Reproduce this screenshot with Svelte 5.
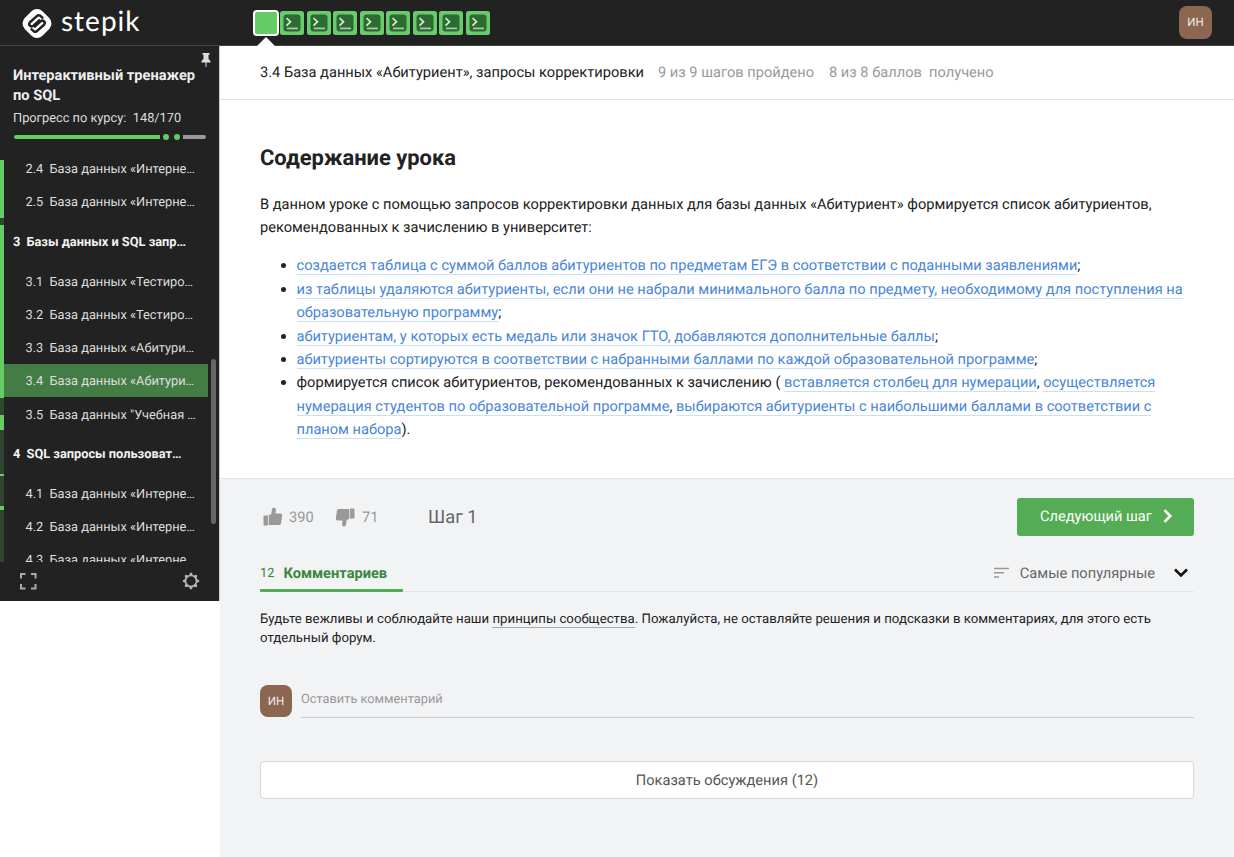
<script>
  const steps = [1, 2, 3, 4, 5, 6, 7, 8];
  const nav = [
    { n: '2.4', t: 'База данных «Интерне…', h: 33 },
    { n: '2.5', t: 'База данных «Интерне…', h: 33 },
    { n: '3', t: 'Базы данных и SQL запр…', h: 47, head: true },
    { n: '3.1', t: 'База данных «Тестиро…', h: 33 },
    { n: '3.2', t: 'База данных «Тестиро…', h: 33 },
    { n: '3.3', t: 'База данных «Абитури…', h: 34 },
    { n: '3.4', t: 'База данных «Абитури…', h: 33, active: true },
    { n: '3.5', t: 'База данных "Учебная …', h: 33 },
    { n: '4', t: 'SQL запросы пользоват…', h: 46, head: true },
    { n: '4.1', t: 'База данных «Интерне…', h: 33 },
    { n: '4.2', t: 'База данных «Интерне…', h: 33 },
    { n: '4.3', t: 'База данных «Интерне…', h: 33 }
  ];
  // Section progress along the left edge of the lesson list: [height, colour]
  const rail = [
    [58, '#66cc66'], [7, '#2b4a2d'], [173, '#66cc66'], [17, '#2b4a2d'], [15, '#66cc66'],
    [44, '#304431'], [2, '#66cc66'], [30, '#304431'], [4, '#66cc66'], [52, '#304431']
  ];
</script>

{#snippet thumb()}
  <path d="M.5 8.800 4.900 8.200V18.400H1.500Q.5 18.400.5 17.400z" />
  <path d="M5.700 8.200 8.300 6.900 9 2.200Q9.400.3 11 .4 12.900.6 12.900 2.800L12.500 6.400H17.600Q19.400 6.600 19.200 8.500L18 16.500Q17.700 18 16.300 18H5.700z" />
{/snippet}

<header>
  <div class="logo">
    <svg width="30" height="31" viewBox="0 0 30 31">
      <rect x="2.500" y="3" width="25" height="25" rx="7.700" fill="#fff" transform="rotate(45 15 15.5)" />
      <g fill="none" stroke="#222" stroke-width="2.500" stroke-linecap="round" stroke-linejoin="round" transform="rotate(-8 15 15.5)">
        <path d="M21.200 10.400 19.200 8.200Q17.600 6.900 15.900 8.100L8.200 13.300Q6.300 15 7.800 16.800 9.300 18.300 11.200 17.100L17.600 12.700" />
        <path d="M8.800 20.600 10.800 22.800Q12.400 24.100 14.100 22.900L21.800 17.700Q23.700 16 22.200 14.200 20.700 12.700 18.800 13.900L12.400 18.300" />
      </g>
    </svg>
    <span>stepik</span>
  </div>
  <div class="steps">
    <div class="current"><i></i></div>
    {#each steps as s (s)}
      <div class="step">
        <svg width="24" height="24" viewBox="0 0 24 24">
          <rect width="24" height="24" rx="2.5" fill="#68cc6c" />
          <rect x="3.5" y="3.5" width="17" height="17" rx="3" fill="#2e6b33" />
          <path d="M6.5 7 10.5 10.8 6.5 14.6" fill="none" stroke="#d9ecd9" stroke-width="1.7" />
          <path d="M7 17.4H18" stroke="#a3cda4" stroke-width="1.7" />
        </svg>
      </div>
    {/each}
  </div>
  <div class="avatar top">ИН</div>
</header>

<div class="page">
  <aside>
    <div class="course">
      <svg class="pin" width="10" height="14" viewBox="0 0 10 14" fill="#ddd">
        <path d="M1.500 0h7v1.800H7.500V6L9.500 8v1.500H.5V8L2.500 6V1.800H1.500z" />
        <path d="M4.500 9h1v5h-1z" />
      </svg>
      <h2>Интерактивный тренажер<br />по SQL</h2>
      <p>Прогресс по курсу:&nbsp; 148/170</p>
      <div class="progress"><b></b><i></i><i></i><s></s></div>
    </div>
    <div class="list">
      <div class="rail">
        {#each rail as [h, c]}<div style="height:{h}px;background:{c}"></div>{/each}
      </div>
      <nav>
        {#each nav as it (it.n)}
          <div class="item" class:head={it.head} class:active={it.active} style="height:{it.h}px">
            <span>{it.n}</span><span>{it.t}</span>
          </div>
        {/each}
      </nav>
      <div class="scroll"><div></div></div>
    </div>
    <div class="tools">
      <svg width="18" height="18" viewBox="0 0 18 18" fill="none" stroke="#aaa" stroke-width="2">
        <path d="M2 6.500V2h4.500M12 2h4.500v4.500M16.500 12v4.500H12M6.500 16.500H2V12" />
      </svg>
      <svg width="18" height="18" viewBox="0 0 18 18">
        <circle cx="9" cy="9" r="5.5" fill="none" stroke="#b5b5b5" stroke-width="1.6" />
        <g fill="#b5b5b5">
          {#each [0, 45, 90, 135, 180, 225, 270, 315] as a}
            <path d="M7 3.3 8.2.8h1.6L11 3.3z" transform="rotate({a} 9 9)" />
          {/each}
        </g>
      </svg>
    </div>
  </aside>

  <main>
    <div class="lesson">
      <span class="title">3.4 База данных «Абитуриент», запросы корректировки</span>
      <span class="passed">9 из 9 шагов пройдено</span>
      <span class="score">8 из 8 баллов&nbsp; получено</span>
    </div>

    <article>
      <h1>Содержание урока</h1>
      <p>
        В данном уроке с помощью запросов корректировки данных для базы данных «Абитуриент» формируется список абитуриентов,<br />
        рекомендованных к зачислению в университет:
      </p>
      <ul>
        <li><a>создается таблица с суммой баллов абитуриентов по предметам ЕГЭ в соответствии с поданными заявлениями</a>;</li>
        <li><a>из таблицы удаляются абитуриенты, если они не набрали минимального балла по предмету, необходимому для поступления на<br />образовательную программу</a>;</li>
        <li><a>абитуриентам, у которых есть медаль или значок ГТО, добавляются дополнительные баллы</a>;</li>
        <li><a>абитуриенты сортируются в соответствии с набранными баллами по каждой образовательной программе</a>;</li>
        <li>формируется список абитуриентов, рекомендованных к зачислению ( <a>вставляется столбец для нумерации</a>, <a>осуществляется<br />нумерация студентов по образовательной программе</a>, <a>выбираются абитуриенты с наибольшими баллами в соответствии с<br />планом набора</a>).</li>
      </ul>
    </article>

    <section>
      <div class="actions">
        <svg width="20" height="20" viewBox="0 0 20 20" fill="#999">{@render thumb()}</svg>
        <span class="up">390</span>
        <svg width="20" height="20" viewBox="0 0 20 20" fill="#999">
          <g transform="rotate(180 10 10)">{@render thumb()}</g>
        </svg>
        <span class="down">71</span>
        <span class="stepname">Шаг 1</span>
        <button class="next">
          <span>Следующий шаг</span>
          <svg width="10" height="14" viewBox="0 0 10 14"><path d="M1.500 1.200 7.300 7 1.500 12.800" fill="none" stroke="#fff" stroke-width="2.600" /></svg>
        </button>
      </div>

      <div class="tabs">
        <div class="tab"><span>12</span><b>Комментариев</b></div>
        <div class="sort">
          <svg width="15" height="12" viewBox="0 0 15 12" stroke="#999" stroke-width="1.500"><path d="M0 1.500h15M0 5.700h10M0 10h5" /></svg>
          <span>Самые популярные</span>
          <svg width="16" height="12" viewBox="0 0 16 12"><path d="M2 2.500 8 8.500 14 2.500" fill="none" stroke="#111" stroke-width="2.600" /></svg>
        </div>
      </div>

      <p class="rules">
        Будьте вежливы и соблюдайте наши <u>принципы сообщества</u>. Пожалуйста, не оставляйте решения и подсказки в комментариях, для этого есть<br />отдельный форум.
      </p>

      <div class="comment">
        <div class="avatar">ИН</div>
        <div class="field"><span>Оставить комментарий</span></div>
      </div>

      <button class="show"><span>Показать обсуждения (12)</span></button>
    </section>
  </main>
</div>

<style>
  :global(body) { margin: 0; background: #fff; }
  :global(#app) { font-family: Roboto, "Liberation Sans", sans-serif; color: #222; height: 857px; overflow: hidden; text-rendering: geometricPrecision; }
  header { height: 46px; background: #222; display: flex; align-items: flex-start; box-sizing: border-box; border-bottom: 1px solid #444; }
  .logo { width: 231px; padding: 8px 0 0 22px; display: flex; gap: 9px; }
  .logo svg { flex: none; }
  .logo span { font: 400 28px/25px Lato, sans-serif; letter-spacing: 1px; color: #fff; white-space: nowrap; }
  .steps { display: flex; gap: 2.5px; padding-top: 11px; }
  .step { width: 24px; height: 24px; }
  .step svg { display: block; }
  .current { width: 22px; height: 22px; border: 2px solid #fff; border-radius: 4px; background: #66cc66; margin: -1px -1.5px 0 0; position: relative; }
  .current i { position: absolute; left: 2px; top: 25px; border: 9px solid transparent; border-top: 0; border-bottom-color: #fff; }
  .avatar { width: 32px; height: 32px; border-radius: 8px; background: #8b6651; color: #f4ece8; font-size: 11.5px; line-height: 33px; text-align: center; flex: none; }
  .avatar.top { width: 33px; height: 33px; margin: 6px 22px 0 auto; }
  .page { display: flex; align-items: flex-start; }
  aside { width: 220px; height: 555px; background: #222; flex: none; color: #eee; border-right: 1px solid #ccc; box-sizing: border-box; }
  .course { height: 114px; padding-left: 13px; position: relative; box-sizing: border-box; padding-top: 19px; }
  .pin { position: absolute; left: 201px; top: 7px; }
  h2 { margin: 0; font-size: 14.62px; line-height: 20px; font-weight: 700; white-space: nowrap; }
  .course p { margin: 5px 0 0; font-size: 12.8px; line-height: 17px; color: #ddd; white-space: nowrap; }
  .progress { display: flex; align-items: center; height: 6px; margin: 7px 0 0 1px; }
  .progress b { width: 146px; height: 4px; background: #66cc66; border-radius: 2px 0 0 2px; }
  .progress i { width: 6px; height: 6px; border-radius: 3px; background: #66cc66; margin-left: 3px; }
  .progress i + i { margin-left: 5px; }
  .progress s { width: 23px; height: 4px; border-radius: 0 2px 2px 0; background: #999; margin-left: 3px; }
  .list { height: 402px; display: flex; overflow: hidden; }
  .rail { width: 4px; flex: none; }
  nav { width: 204px; flex: none; margin-top: -9px; }
  .item { display: flex; align-items: center; font-size: 12.8px; padding: 3px 0 0 21.5px; color: #ddd; white-space: nowrap; box-sizing: border-box; }
  .item span:first-child { width: 24px; flex: none; }
  .item.head { padding-left: 9px; font-size: 12.8px; font-weight: 700; color: #f2f2f2; }
  .item.head span:first-child { width: 13.5px; }
  .item.active { background: #437d45; padding-top: 2px; }
  .scroll { padding: 199px 0 0 3px; }
  .scroll div { width: 5px; height: 165px; border-radius: 3px; background: #666; }
  .tools { display: flex; justify-content: space-between; padding: 10px 19px 0 19px; }
  main { flex: 1; min-width: 0; }
  .lesson { height: 54px; box-sizing: border-box; border-bottom: 1px solid #e2e2e2; padding: 0 0 1px 40px; display: flex; align-items: center; font-size: 14.63px; white-space: nowrap; }
  .lesson span { color: #999; }
  .lesson .title { color: #222; width: 398px; }
  .lesson .passed { width: 171px; }
  article { height: 378px; padding-left: 40px; box-sizing: border-box; padding-top: 44px; font-size: 14.625px; line-height: 23.4px; white-space: nowrap; }
  h1 { margin: 0 0 19px; font-size: 21.9px; line-height: 30px; font-weight: 700; }
  article p { margin: 0; }
  ul { margin: 14.6px 0 0; padding-left: 36.5px; }
  a { color: #4a86d8; border-bottom: 1px solid #c9e0f8; }
  section { background: #f2f3f5; border-top: 1px solid #e2e3e5; height: 379px; box-sizing: border-box; padding: 18.5px 40px 0 40px; }
  .actions { display: flex; height: 38px; align-items: center; font-size: 14.63px; color: #999; }
  .actions svg { flex: none; margin-left: 3px; }
  .up { width: 43px; margin-left: 6px; }
  .down { width: 48px; margin-left: 7px; }
  .down + .stepname { margin-left: 18px; padding-top: 1px; font-size: 18.3px; color: #666; }
  button { font-family: inherit; border: 0; padding: 0; text-rendering: inherit; }
  .next { margin-left: auto; width: 177px; height: 38px; border-radius: 3px; background: #54ad54; color: #fff; font-size: 14.63px; display: flex; align-items: center; padding: 0 0 1px 23px; box-sizing: border-box; }
  .actions .next svg { margin-left: 11px; }
  .tabs { height: 56px; display: flex; justify-content: space-between; box-sizing: border-box; border-bottom: 1px solid #e4e5e7; }
  .tab { width: 143px; height: 56px; box-sizing: border-box; border-bottom: 3px solid #54ad54; color: #36883a; font-size: 12.8px; display: flex; align-items: center; padding-top: 21px; border-radius: 1px; white-space: nowrap; }
  .tab span { padding-top: 1px; }
  .tab b { font-size: 14.63px; margin-left: 9px; }
  .sort { display: flex; align-items: center; padding: 19px 5px 0 0; font-size: 14.63px; color: #666; white-space: nowrap; }
  .sort span { margin: 0 18px 0 10.5px; }
  .rules { margin: 19.5px 0 0; font-size: 13.23px; line-height: 18.5px; white-space: nowrap; }
  .rules u { text-decoration: none; border-bottom: 1px solid #aaa; }
  .comment { margin-top: 37px; display: flex; gap: 9px; }
  .field { flex: 1; height: 32px; border-bottom: 1px solid #ccc; font-size: 12.8px; line-height: 29px; color: #999; }
  .show { display: block; width: 934px; height: 38px; margin-top: 43px; padding-bottom: 1px; background: #fff; border: 1px solid #d5d6d8; border-radius: 4px; font-size: 14.63px; color: #555; }
</style>
